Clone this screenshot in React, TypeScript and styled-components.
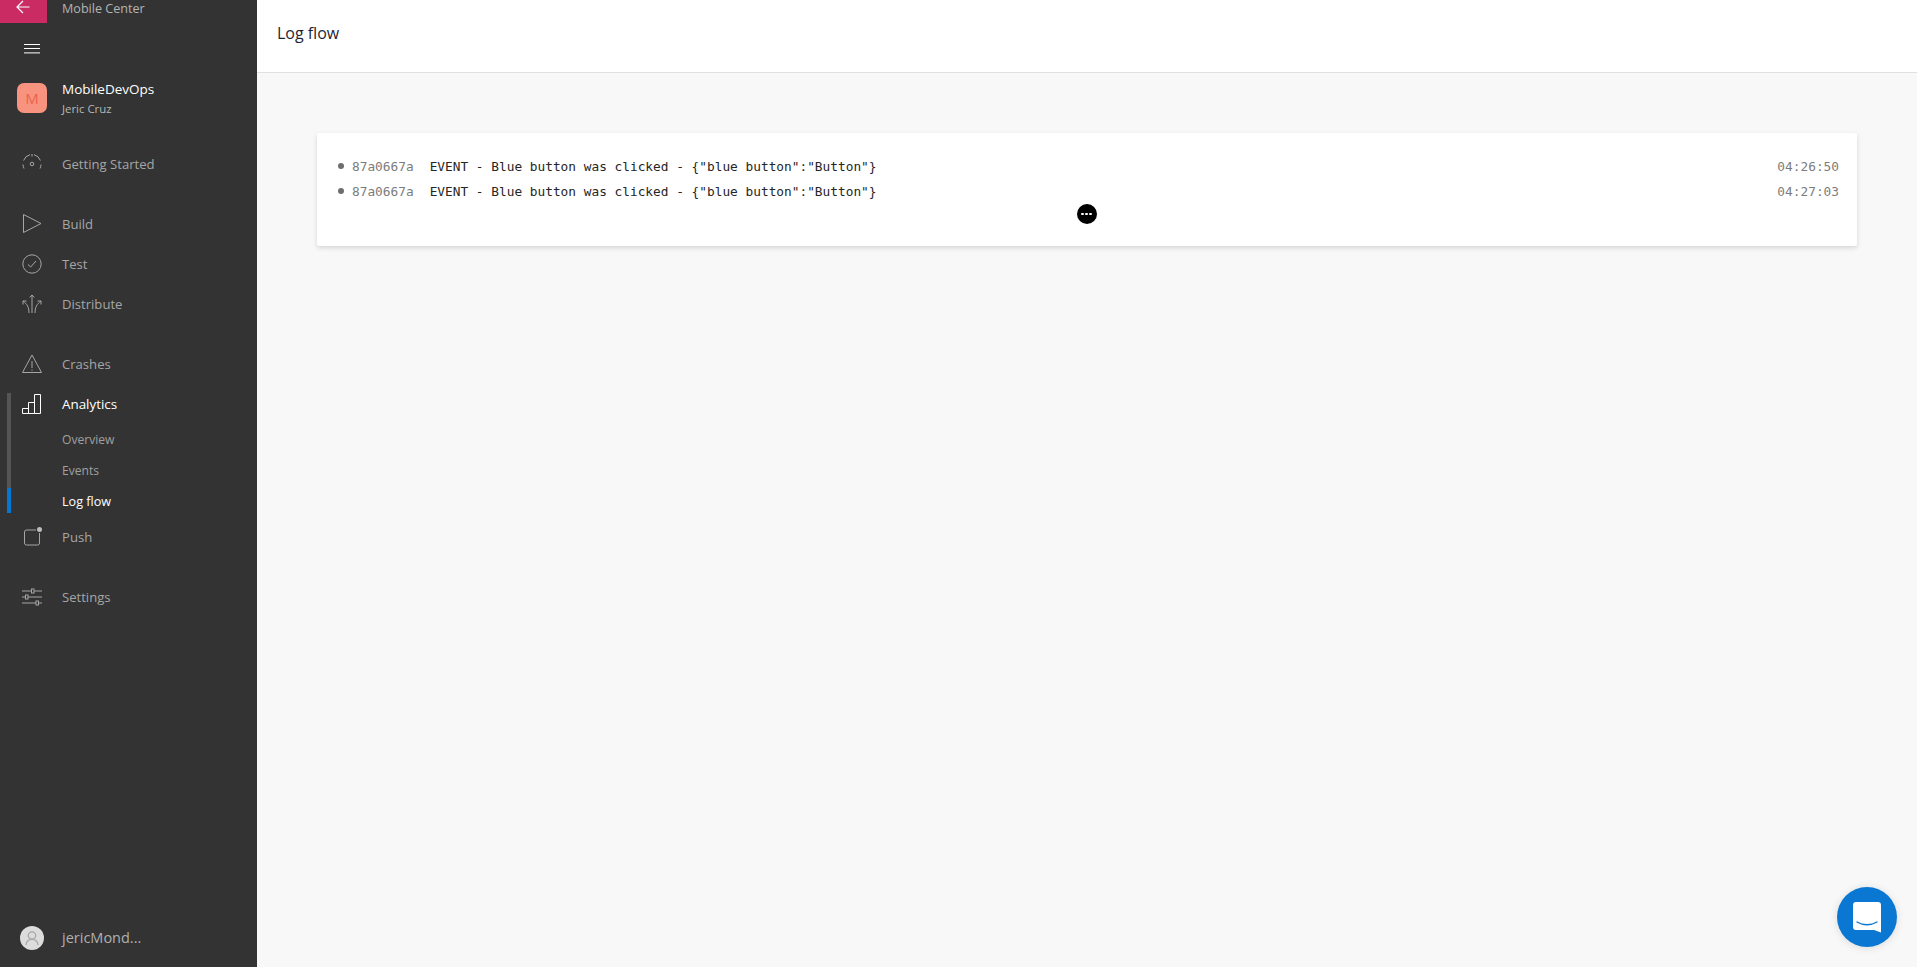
import React from "react";
import styled, { createGlobalStyle } from "styled-components";

const Global = createGlobalStyle`
  html, body { margin: 0; padding: 0; height: 100%; overflow: hidden; }
  #root { height: 100%; }
  * { box-sizing: border-box; }
  body { font-family: "Open Sans", "Noto Sans", "Liberation Sans", sans-serif; }
`;

const Shell = styled.div`
  display: flex;
  height: 967px;
  background: #f8f8f8;
`;
const Sidebar = styled.aside`
  width: 257px;
  flex: none;
  background: #333333;
  display: flex;
  flex-direction: column;
  color: #a6a6a6;
  font-size: 13.1px;
`;
const TopRow = styled.div`
  display: flex;
  height: 23px;
  align-items: flex-start;
`;
const BackButton = styled.div`
  width: 47px;
  height: 23px;
  background: #c92b62;
  display: flex;
  align-items: flex-start;
  justify-content: center;
  padding-right: 2px;
  margin-right: 15px;
`;
const AppName = styled.div`
  font-size: 12.6px;
  line-height: 18px;
  color: #b4b4b4;
`;
const MenuRow = styled.div`
  height: 50px;
  padding: 2px 0 0 24px;
  display: flex;
  align-items: center;
`;
const OrgRow = styled.div`
  height: 50px;
  padding-left: 17px;
  display: flex;
  align-items: center;
  gap: 15px;
  margin-bottom: 21px;
`;
const OrgAvatar = styled.div`
  width: 30px;
  height: 30px;
  border-radius: 7px;
  background: #f8937f;
  color: #e9634e;
  font-size: 15px;
  display: flex;
  align-items: center;
  justify-content: center;
`;
const OrgText = styled.div`
  display: flex;
  flex-direction: column;
  padding-top: 2px;
`;
const OrgName = styled.div`
  color: #ffffff;
  font-size: 13.5px;
  line-height: 19px;
`;
const OrgUser = styled.div`
  color: #b8b8b8;
  font-size: 11.4px;
  line-height: 19px;
`;
const NavGroup = styled.nav`
  position: relative;
  display: flex;
  flex-direction: column;
  margin-bottom: 20px;
`;
const NavItem = styled.div<{ $active?: boolean }>`
  height: 40px;
  padding-left: 22px;
  display: flex;
  align-items: center;
  gap: 20px;
  color: ${(p) => (p.$active ? "#ffffff" : "#a6a6a6")};
  font-size: ${(p) => (p.$active ? "13.4px" : "13.1px")};
`;
const SubItem = styled.div<{ $active?: boolean }>`
  height: 31px;
  padding-left: 62px;
  display: flex;
  align-items: center;
  font-size: ${(p) => (p.$active ? "12.6px" : "12.1px")};
  color: ${(p) => (p.$active ? "#ffffff" : "#a0a0a0")};
`;
const Track = styled.div`
  position: absolute;
  left: 7px;
  top: 49px;
  width: 4px;
  height: 120px;
  background: #555555;
`;
const TrackThumb = styled.div`
  position: absolute;
  left: 0;
  bottom: 0;
  width: 4px;
  height: 25px;
  background: #0078d4;
`;
const Icon = styled.svg`
  width: 20px;
  height: 20px;
  flex: none;
  fill: none;
  stroke: currentColor;
  stroke-width: 1;
  color: #a6a6a6;
`;
const ActiveIcon = styled(Icon)`
  color: #ffffff;
`;
const UserRow = styled.div`
  margin-top: auto;
  height: 60px;
  padding: 1px 0 0 20px;
  display: flex;
  align-items: center;
  gap: 18px;
  font-size: 14.5px;
  color: #b0b0b0;
`;
const UserAvatar = styled.div`
  width: 24px;
  height: 24px;
  border-radius: 50%;
  background: #dcdcdc;
  display: flex;
  align-items: center;
  justify-content: center;
`;
const Main = styled.main`
  flex: 1;
  min-width: 0;
  display: flex;
  flex-direction: column;
`;
const Header = styled.header`
  height: 73px;
  background: #ffffff;
  border-bottom: 1px solid #e0e0e0;
  padding: 0 0 7px 20px;
  display: flex;
  align-items: center;
`;
const Title = styled.h1`
  margin: 0;
  font-size: 16px;
  font-weight: 400;
  color: #1f1f33;
`;
const Content = styled.div`
  flex: 1;
  padding: 60px 60px 0 60px;
`;
const Card = styled.section`
  height: 113px;
  background: #ffffff;
  border-radius: 2px;
  box-shadow: 0 2px 5px rgba(0, 0, 0, 0.14);
  padding: 21px 18px 0 21px;
  display: flex;
  flex-direction: column;
`;
const LogRow = styled.div`
  height: 25px;
  display: flex;
  align-items: center;
  font-family: "DejaVu Sans Mono", "Liberation Mono", monospace;
  font-size: 12.8px;
  white-space: pre;
`;
const Bullet = styled.span`
  width: 6px;
  height: 6px;
  border-radius: 50%;
  background: #6e6e6e;
  margin: -2px 8px 0 0;
  flex: none;
`;
const LogId = styled.span`
  color: #7c7c7c;
  margin-right: 16px;
`;
const LogMessage = styled.span`
  color: #262626;
  flex: 1;
`;
const LogTime = styled.span`
  color: #7c7c7c;
`;
const MoreRow = styled.div`
  display: flex;
  justify-content: center;
  padding-right: 4px;
`;
const MoreButton = styled.div`
  width: 20px;
  height: 20px;
  border-radius: 50%;
  background: #000000;
  display: flex;
  align-items: center;
  justify-content: center;
  gap: 1.5px;
`;
const Dot = styled.span`
  width: 2.5px;
  height: 2.5px;
  background: #ffffff;
  border-radius: 50%;
`;
const ChatButton = styled.div`
  position: fixed;
  right: 20px;
  bottom: 20px;
  width: 60px;
  height: 60px;
  border-radius: 50%;
  background: #0a78d2;
  box-shadow: 0 1px 8px rgba(0, 0, 0, 0.12);
  display: flex;
  align-items: center;
  justify-content: center;
`;

const Arrow = () => (
  <svg width="14" height="14" viewBox="0 0 14 14" fill="none" stroke="#fff" strokeWidth="1.2">
    <path d="M1.5 7H13.5M7 1L1 7l6 6" />
  </svg>
);
const Hamburger = () => (
  <svg width="16" height="10" viewBox="0 0 16 10" stroke="#fff" strokeWidth="1">
    <path d="M0 .5H16M0 4.5H16M0 8.9H16" />
  </svg>
);
const Gauge = () => (
  <Icon viewBox="0 0 20 20">
    <path d="M2 14.5A9 9 0 0 1 1 10.5M1.6 6.5A9 9 0 0 1 8 .7M12 .7A9 9 0 0 1 18.4 6.5M19 10.5A9 9 0 0 1 18 14.5" />
    <path d="M10 0v2.5" />
    <circle cx="10" cy="10" r="1.8" />
  </Icon>
);
const Play = () => (
  <Icon viewBox="0 0 20 20">
    <path d="M1.5.5 19 9.5 1.5 18.5Z" />
  </Icon>
);
const Check = () => (
  <Icon viewBox="0 0 20 20">
    <circle cx="10" cy="10" r="9.2" />
    <path d="M6 10.5 8.7 13 14 7" />
  </Icon>
);
const Distribute = () => (
  <Icon viewBox="0 0 20 20">
    <path d="M10 19V1M7.6 3.4 10 1l2.4 2.4" />
    <path d="M7 19C7 13 5 10 1 7M1 10.5V7h3.5" />
    <path d="M13 19c0-6 2-9 6-12M19 10.5V7h-3.5" />
  </Icon>
);
const Warning = () => (
  <Icon viewBox="0 0 20 20">
    <path d="M10 1 19.5 18.5H.5Z" />
    <path d="M10 7v7M10 15.5v1.2" />
  </Icon>
);
const Bars = () => (
  <ActiveIcon viewBox="0 0 20 20">
    <path d="M.5 14.5h6v5h-6ZM6.5 8.5h6v11h-6ZM12.5.5h6v19h-6Z" />
  </ActiveIcon>
);
const Push = () => (
  <Icon viewBox="0 0 20 20">
    <path d="M17.5 6v10a2 2 0 0 1-2 2h-11a2 2 0 0 1-2-2V5a2 2 0 0 1 2-2H14" />
    <circle cx="17.5" cy="2.5" r="2.5" fill="#bdbdbd" stroke="none" />
  </Icon>
);
const Sliders = () => (
  <Icon viewBox="0 0 20 20">
    <path d="M0 4h9.5M12 4h8M0 10h3.5M6 10h14M0 16h14M16.5 16H20" />
    <rect x="9.5" y="2" width="2.5" height="4" />
    <rect x="3.5" y="8" width="2.5" height="4" />
    <rect x="14" y="14" width="2.5" height="4" />
  </Icon>
);
const Person = () => (
  <svg width="16" height="16" viewBox="0 0 16 16" fill="none" stroke="#a8a8a8" strokeWidth="1.3">
    <circle cx="8" cy="5.5" r="3.7" />
    <path d="M2 15c.4-3.4 2.6-5.6 6-5.6s5.6 2.2 6 5.6" />
  </svg>
);
const ChatIcon = () => (
  <svg width="28" height="31" viewBox="0 0 28 31">
    <path d="M3 0H25a3 3 0 0 1 3 3V30.5L21 28H3a3 3 0 0 1-3-3V3a3 3 0 0 1 3-3Z" fill="#fff" />
    <path d="M4 20c6 3.6 14 3.6 20 0" fill="none" stroke="#0a78d2" strokeWidth="1.4" strokeLinecap="round" />
  </svg>
);

const logs = [
  { id: "87a0667a", time: "04:26:50" },
  { id: "87a0667a", time: "04:27:03" },
];

export default function App() {
  return (
    <Shell>
      <Global />
      <Sidebar>
        <TopRow>
          <BackButton>
            <Arrow />
          </BackButton>
          <AppName>Mobile Center</AppName>
        </TopRow>
        <MenuRow>
          <Hamburger />
        </MenuRow>
        <OrgRow>
          <OrgAvatar>M</OrgAvatar>
          <OrgText>
            <OrgName>MobileDevOps</OrgName>
            <OrgUser>Jeric Cruz</OrgUser>
          </OrgText>
        </OrgRow>
        <NavGroup>
          <NavItem>
            <Gauge />
            Getting Started
          </NavItem>
        </NavGroup>
        <NavGroup>
          <NavItem>
            <Play />
            Build
          </NavItem>
          <NavItem>
            <Check />
            Test
          </NavItem>
          <NavItem>
            <Distribute />
            Distribute
          </NavItem>
        </NavGroup>
        <NavGroup>
          <Track>
            <TrackThumb />
          </Track>
          <NavItem>
            <Warning />
            Crashes
          </NavItem>
          <NavItem $active>
            <Bars />
            Analytics
          </NavItem>
          <SubItem>Overview</SubItem>
          <SubItem>Events</SubItem>
          <SubItem $active>Log flow</SubItem>
          <NavItem>
            <Push />
            Push
          </NavItem>
        </NavGroup>
        <NavGroup>
          <NavItem>
            <Sliders />
            Settings
          </NavItem>
        </NavGroup>
        <UserRow>
          <UserAvatar>
            <Person />
          </UserAvatar>
          jericMond...
        </UserRow>
      </Sidebar>
      <Main>
        <Header>
          <Title>Log flow</Title>
        </Header>
        <Content>
          <Card>
            {logs.map((l) => (
              <LogRow key={l.time}>
                <Bullet />
                <LogId>{l.id}</LogId>
                <LogMessage>{'EVENT - Blue button was clicked - {"blue button":"Button"}'}</LogMessage>
                <LogTime>{l.time}</LogTime>
              </LogRow>
            ))}
            <MoreRow>
              <MoreButton>
                <Dot />
                <Dot />
                <Dot />
              </MoreButton>
            </MoreRow>
          </Card>
        </Content>
      </Main>
      <ChatButton>
        <ChatIcon />
      </ChatButton>
    </Shell>
  );
}
